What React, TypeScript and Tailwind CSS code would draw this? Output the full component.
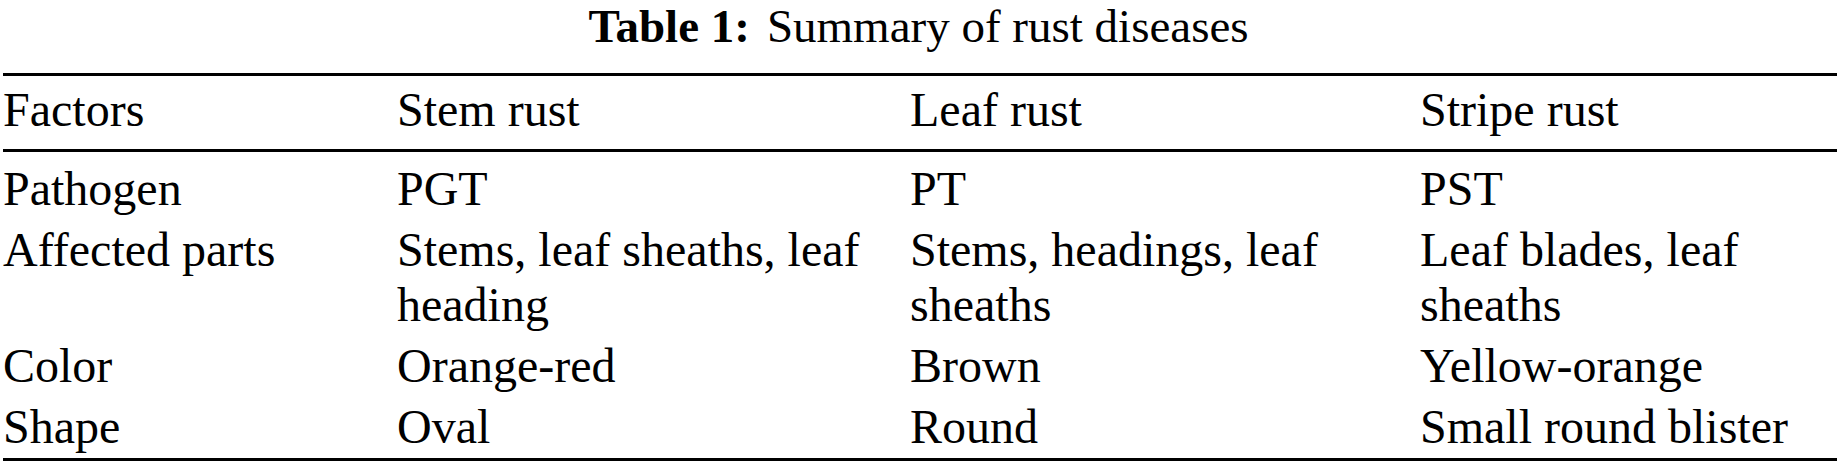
import React from 'react';

// Rows of the rust summary table
const header = ['Factors', 'Stem rust', 'Leaf rust', 'Stripe rust'];

const rows: string[][] = [
  ['Pathogen', 'PGT', 'PT', 'PST'],
  ['Affected parts', 'Stems, leaf sheaths, leaf heading', 'Stems, headings, leaf sheaths', 'Leaf blades, leaf sheaths'],
  ['Color', 'Orange-red', 'Brown', 'Yellow-orange'],
  ['Shape', 'Oval', 'Round', 'Small round blister'],
];

const gridCols = 'grid grid-cols-[394px_513px_510px_1fr] leading-[55px]';

const App: React.FC = () => {
  return (
    <div className="w-[1837px] h-[467px] bg-white text-black [font-family:'Liberation_Serif','Times_New_Roman',serif] text-[48px] overflow-hidden">
      {/* Caption */}
      <div className="text-center text-[47px] leading-[53px] whitespace-nowrap">
        <span className="font-bold mr-[17px]">Table 1:</span>
        <span>Summary of rust diseases</span>
      </div>

      <div className="mt-[20px] pl-[3px]">
        {/* Header */}
        <div className="border-t-[3px] border-b-[3px] border-black pt-[6px] pb-[12px]">
          <div className={gridCols}>
            {header.map((h) => (
              <div key={h}>{h}</div>
            ))}
          </div>
        </div>

        {/* Body */}
        <div className="flex flex-col gap-[6px] border-b-[3px] border-black pt-[9px] pb-[4px]">
          {rows.map((row) => (
            <div key={row[0]} className={gridCols}>
              {row.map((cell, i) => (
                <div key={i} className="pr-[10px]">
                  {cell}
                </div>
              ))}
            </div>
          ))}
        </div>
      </div>
    </div>
  );
};

export default App;
